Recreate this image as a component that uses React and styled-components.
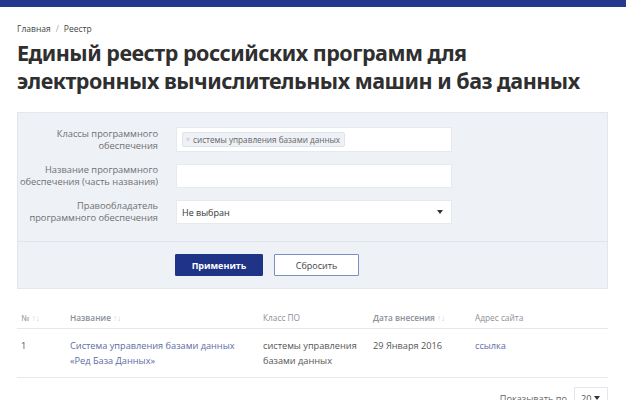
import React from "react";
import styled, { createGlobalStyle } from "styled-components";

const Global = createGlobalStyle`
  html, body { margin: 0; padding: 0; background: #fff; }
  body { font-family: "Open Sans", "Noto Sans", sans-serif; color: #333; width: 628px; height: 400px; overflow: hidden; }
  * { box-sizing: border-box; }
`;

const TopBar = styled.div`
  height: 7px;
  width: 626px;
  background: #253a8f;
`;

const Page = styled.div`
  padding: 0 20px 0 17px;
`;

const Crumbs = styled.div`
  margin-top: 16px;
  font-size: 8.5px;
  color: #444;
  display: flex;
  gap: 5px;
  height: 11px;
  align-items: center;
`;

const Sep = styled.span`
  color: #aaa;
`;

const Title = styled.h1`
  margin: 5px 0 0;
  font-family: "Noto Sans", "Open Sans", sans-serif;
  font-weight: 700;
  font-size: 21.5px;
  line-height: 28px;
  color: #2f2f2f;
  letter-spacing: -0.5px;
  white-space: nowrap;
`;

const Panel = styled.form`
  margin-top: 17px;
  width: 591px;
  background: #eef1f6;
  border: 1px solid #e2e6ed;
`;

const Fields = styled.div`
  padding: 14px 0 17px;
  display: flex;
  flex-direction: column;
  gap: 12px;
  border-bottom: 1px solid #e0e4eb;
`;

const Row = styled.div`
  display: grid;
  grid-template-columns: 140px 276px;
  column-gap: 18px;
  align-items: center;
`;

const Label = styled.label`
  text-align: right;
  font-size: 9.3px;
  line-height: 12px;
  color: #707070;
  white-space: nowrap;
`;

const Input = styled.div`
  height: ${(p) => p.h || 24}px;
  background: #fff;
  border: 1px solid #e6e9ef;
  display: flex;
  align-items: center;
  padding: 0 5px;
  font-size: 9px;
  color: #333;
  justify-content: ${(p) => (p.start ? "flex-start" : "space-between")};
`;

const Tag = styled.span`
  background: #eef1f6;
  border: 1px solid #dfe3ea;
  border-radius: 2px;
  padding: 1px 4px 1px 3px;
  font-size: 8.2px;
  color: #666;
  display: inline-flex;
  align-items: center;
  gap: 3px;
`;

const TagX = styled.span`
  color: #bbb;
  font-size: 7px;
`;

const Caret = styled.span`
  width: 0;
  height: 0;
  border-left: 3px solid transparent;
  border-right: 3px solid transparent;
  border-top: 4px solid #333;
  margin-right: 3px;
`;

const Buttons = styled.div`
  padding: 12px 0 12px 157px;
  display: flex;
  gap: 11px;
`;

const Button = styled.button`
  height: 22px;
  width: ${(p) => p.w}px;
  font-family: inherit;
  font-size: 9px;
  border-radius: 1px;
  cursor: pointer;
  background: ${(p) => (p.primary ? "#1f3486" : "#fff")};
  color: ${(p) => (p.primary ? "#fff" : "#444")};
  font-weight: ${(p) => (p.primary ? 700 : 400)};
  border: 1px solid ${(p) => (p.primary ? "#1f3486" : "#7b8fc4")};
`;

const Table = styled.div`
  margin-top: 21px;
  width: 591px;
`;

const TRow = styled.div`
  display: grid;
  grid-template-columns: 53px 193px 110px 102px 1fr;
  padding: ${(p) => (p.head ? "0 0 3px" : "9px 0 9px")};
  border-bottom: 1px solid #e6e8ec;
  font-size: ${(p) => (p.head ? 8.3 : 9.2)}px;
  line-height: 15px;
  color: ${(p) => (p.head ? "#8a8f99" : "#555")};
`;

const Cell = styled.div`
  padding-left: ${(p) => (p.first ? 4 : 0)}px;
  color: ${(p) => (p.link ? "#5d6ba6" : "inherit")};
  padding-right: 6px;
  white-space: nowrap;
`;

const HeadCell = styled.div`
  padding-left: ${(p) => (p.first ? 4 : 0)}px;
  color: #8a8f99;
  font-weight: ${(p) => (p.bold ? 600 : 400)};
`;

const Arrows = styled.span`
  color: #c5cde0;
  font-weight: 400;
  margin-left: 2px;
`;

const Footer = styled.div`
  width: 591px;
  display: flex;
  justify-content: flex-end;
  align-items: center;
  gap: 7px;
  margin-top: 9px;
  font-size: 9.2px;
  color: #666;
`;

const PerPage = styled.div`
  width: 34px;
  height: 22px;
  border: 1px solid #e3e6ec;
  display: flex;
  align-items: center;
  justify-content: space-between;
  padding: 0 4px 0 6px;
  color: #555;
`;

export default function App() {
  return (
    <>
      <Global />
      <TopBar />
      <Page>
        <Crumbs>
          <span>Главная</span>
          <Sep>/</Sep>
          <span>Реестр</span>
        </Crumbs>
        <Title>
          Единый реестр российских программ для
          <br />
          электронных вычислительных машин и баз данных
        </Title>
        <Panel>
          <Fields>
            <Row>
              <Label>
                Классы программного
                <br />
                обеспечения
              </Label>
              <Input h={25} start>
                <Tag>
                  <TagX>×</TagX>системы управления базами данных
                </Tag>
              </Input>
            </Row>
            <Row>
              <Label>
                Название программного
                <br />
                обеспечения (часть названия)
              </Label>
              <Input h={24} />
            </Row>
            <Row>
              <Label>
                Правообладатель
                <br />
                программного обеспечения
              </Label>
              <Input h={24}>
                <span>Не выбран</span>
                <Caret />
              </Input>
            </Row>
          </Fields>
          <Buttons>
            <Button type="button" primary w={88}>
              Применить
            </Button>
            <Button type="button" w={85}>
              Сбросить
            </Button>
          </Buttons>
        </Panel>
        <Table>
          <TRow head>
            <HeadCell first>
              №<Arrows>↑↓</Arrows>
            </HeadCell>
            <HeadCell bold>
              Название<Arrows>↑↓</Arrows>
            </HeadCell>
            <HeadCell>Класс ПО</HeadCell>
            <HeadCell bold>
              Дата внесения<Arrows>↑↓</Arrows>
            </HeadCell>
            <HeadCell>Адрес сайта</HeadCell>
          </TRow>
          <TRow>
            <Cell first>1</Cell>
            <Cell link>
              Система управления базами данных
              <br />
              «Ред База Данных»
            </Cell>
            <Cell>
              системы управления
              <br />
              базами данных
            </Cell>
            <Cell>29 Января 2016</Cell>
            <Cell link>ссылка</Cell>
          </TRow>
        </Table>
        <Footer>
          <span>Показывать по</span>
          <PerPage>
            <span>20</span>
            <Caret />
          </PerPage>
        </Footer>
      </Page>
    </>
  );
}
